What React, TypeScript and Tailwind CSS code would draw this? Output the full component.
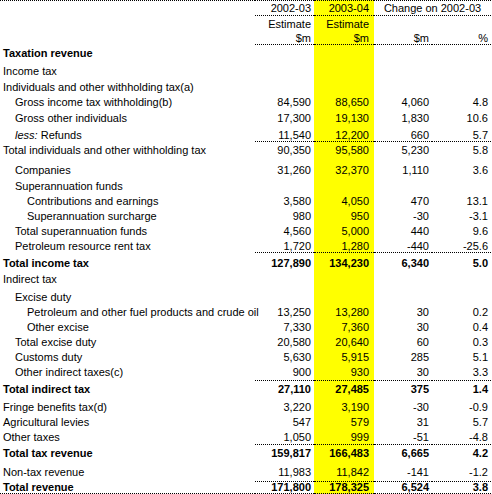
import React from "react";

type Row = {
  label: React.ReactNode;
  ind: 0 | 1 | 2;
  bold?: boolean;
  v?: [string, string, string, string];
  cls: string;
  line?: boolean;
  last?: boolean;
};

const rows: Row[] = [
  { label: "Taxation revenue", ind: 0, bold: true, cls: "h-[18px] pt-[3px]" },
  { label: "Income tax", ind: 0, cls: "h-[16px] pt-[3px]" },
  { label: "Individuals and other withholding tax(a)", ind: 0, cls: "h-[15px] pt-[3px]" },
  { label: "Gross income tax withholding(b)", ind: 1, v: ["84,590", "88,650", "4,060", "4.8"], cls: "h-[16px] pt-[3px]" },
  { label: "Gross other individuals", ind: 1, v: ["17,300", "19,130", "1,830", "10.6"], cls: "h-[16px] pt-[3px]" },
  {
    label: (
      <>
        <span className="italic">less:</span> Refunds
      </>
    ),
    ind: 1,
    v: ["11,540", "12,200", "660", "5.7"],
    cls: "h-[16px] pt-[4px]",
    line: true,
  },
  { label: "Total individuals and other withholding tax", ind: 0, v: ["90,350", "95,580", "5,230", "5.8"], cls: "h-[20px] pt-[3px]" },
  { label: "Companies", ind: 1, v: ["31,260", "32,370", "1,110", "3.6"], cls: "h-[16px] pt-[3px]" },
  { label: "Superannuation funds", ind: 1, cls: "h-[15px] pt-[3px]" },
  { label: "Contributions and earnings", ind: 2, v: ["3,580", "4,050", "470", "13.1"], cls: "h-[15px] pt-[3px]" },
  { label: "Superannuation surcharge", ind: 2, v: ["980", "950", "-30", "-3.1"], cls: "h-[15px] pt-[3px]" },
  { label: "Total superannuation funds", ind: 1, v: ["4,560", "5,000", "440", "9.6"], cls: "h-[15px] pt-[3px]" },
  { label: "Petroleum resource rent tax", ind: 1, v: ["1,720", "1,280", "-440", "-25.6"], cls: "h-[15px] pt-[3px]", line: true },
  { label: "Total income tax", ind: 0, bold: true, v: ["127,890", "134,230", "6,340", "5.0"], cls: "h-[18px] pt-[5px]" },
  { label: "Indirect tax", ind: 0, cls: "h-[18px] pt-[3px]" },
  { label: "Excise duty", ind: 1, cls: "h-[15px] pt-[3px]" },
  { label: "Petroleum and other fuel products and crude oil", ind: 2, v: ["13,250", "13,280", "30", "0.2"], cls: "h-[15px] pt-[3px]" },
  { label: "Other excise", ind: 2, v: ["7,330", "7,360", "30", "0.4"], cls: "h-[15px] pt-[3px]" },
  { label: "Total excise duty", ind: 1, v: ["20,580", "20,640", "60", "0.3"], cls: "h-[15px] pt-[3px]" },
  { label: "Customs duty", ind: 1, v: ["5,630", "5,915", "285", "5.1"], cls: "h-[15px] pt-[3px]" },
  { label: "Other indirect taxes(c)", ind: 1, v: ["900", "930", "30", "3.3"], cls: "h-[17px] pt-[3px]", line: true },
  { label: "Total indirect tax", ind: 0, bold: true, v: ["27,110", "27,485", "375", "1.4"], cls: "h-[18px] pt-[3px]" },
  { label: "Fringe benefits tax(d)", ind: 0, v: ["3,220", "3,190", "-30", "-0.9"], cls: "h-[15px] pt-[3px]" },
  { label: "Agricultural levies", ind: 0, v: ["547", "579", "31", "5.7"], cls: "h-[15px] pt-[3px]" },
  { label: "Other taxes", ind: 0, v: ["1,050", "999", "-51", "-4.8"], cls: "h-[16px] pt-[3px]", line: true },
  { label: "Total tax revenue", ind: 0, bold: true, v: ["159,817", "166,483", "6,665", "4.2"], cls: "h-[19px] pt-[3px]" },
  { label: "Non-tax revenue", ind: 0, v: ["11,983", "11,842", "-141", "-1.2"], cls: "h-[18px] pt-[3px]", line: true },
  { label: "Total revenue", ind: 0, bold: true, v: ["171,800", "178,325", "6,524", "3.8"], cls: "h-[11px] pt-[0px]", last: true },
];

const indCls = ["pl-[3px]", "pl-[15px]", "pl-[27px]"];

export default function App() {
  return (
    <div className="bg-white w-[492px] h-[494px] text-black font-['Liberation_Sans',Arial,sans-serif] text-[11px] leading-[11px]">
      <div className="w-[491px]">
        {/* header row 1 */}
        <div className="grid grid-cols-[255px_59px_60px_58px_59px] h-[16px]">
          <div className="border-t border-dotted border-black" />
          <div className="border-t border-b border-dotted border-black text-right pr-[3px] pt-[2px]">2002-03</div>
          <div className="border-t border-b border-dotted border-black bg-[#ffff00] text-right pr-[5px] pt-[2px]">2003-04</div>
          <div className="col-span-2 border-t border-b border-dotted border-black text-center pt-[2px]">Change on 2002-03</div>
        </div>
        {/* header row 2 */}
        <div className="grid grid-cols-[255px_59px_60px_58px_59px] h-[14px]">
          <div />
          <div className="text-right pr-[3px] pt-[3px]">Estimate</div>
          <div className="bg-[#ffff00] text-right pr-[5px] pt-[3px]">Estimate</div>
          <div />
          <div />
        </div>
        {/* header row 3 */}
        <div className="grid grid-cols-[255px_59px_60px_58px_59px] h-[15px]">
          <div />
          <div className="border-b border-dotted border-black text-right pr-[3px] pt-[3px]">$m</div>
          <div className="border-b border-dotted border-black bg-[#ffff00] text-right pr-[5px] pt-[3px]">$m</div>
          <div className="border-b border-dotted border-black text-right pr-[3px] pt-[3px]">$m</div>
          <div className="border-b border-dotted border-black text-right pr-[3px] pt-[3px]">%</div>
        </div>
        {rows.map((r, i) => {
          const b = r.line || r.last ? "border-b border-dotted border-black" : "";
          const lb = r.last ? "border-b border-dotted border-black" : "";
          const fw = r.bold ? "font-bold" : "";
          return (
            <div key={i} className={`grid grid-cols-[255px_59px_60px_58px_59px] ${r.cls.split(" ")[0]}`}>
              <div className={`${indCls[r.ind]} ${lb} ${fw} ${r.cls.split(" ")[1]} whitespace-nowrap`}>{r.label}</div>
              <div className={`${b} ${fw} ${r.cls.split(" ")[1]} text-right pr-[3px]`}>{r.v ? r.v[0] : ""}</div>
              <div className={`${b} ${fw} ${r.cls.split(" ")[1]} bg-[#ffff00] text-right pr-[5px]`}>{r.v ? r.v[1] : ""}</div>
              <div className={`${b} ${fw} ${r.cls.split(" ")[1]} text-right pr-[3px]`}>{r.v ? r.v[2] : ""}</div>
              <div className={`${b} ${fw} ${r.cls.split(" ")[1]} text-right pr-[3px]`}>{r.v ? r.v[3] : ""}</div>
            </div>
          );
        })}
      </div>
    </div>
  );
}
